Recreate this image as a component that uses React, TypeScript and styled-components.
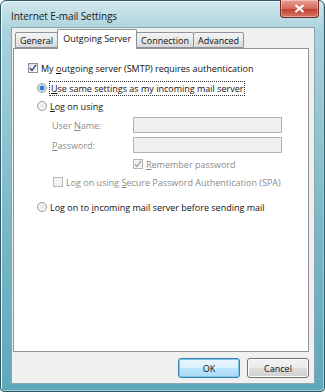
import styled, { createGlobalStyle } from "styled-components";

const GlobalStyle = createGlobalStyle`
    html, body {
        margin: 0;
        padding: 0;
        background: #ffffff;
    }
    body {
        font-family: "Open Sans", "Noto Sans", sans-serif;
    }
`

const Window = styled.div`
    box-sizing: border-box;
    width: 325px;
    height: 392px;
    display: flex;
    flex-direction: column;
    padding: 0 9px 7px 10px;
    border: 1px solid #2f5a66;
    border-radius: 6px 6px 4px 4px;
    background: linear-gradient(180deg, #d2e8ed 0%, #a9d2dc 30px, #78b6c6 60%, #5fa8ba 100%);
    box-shadow: inset 1px 1px 0 #e8f6f9, inset -1px -1px 0 #9fd0db;
`

const TitleBar = styled.div`
    height: 26px;
    display: flex;
    justify-content: space-between;
    align-items: flex-start;
`

const Title = styled.span`
    margin-top: 8px;
    font-size: 10px;
    color: #1b1b1b;
    letter-spacing: -0.1px;
`

const CloseButton = styled.div`
    width: 37px;
    height: 17px;
    margin-right: -4px;
    margin-top: -1px;
    display: flex;
    align-items: center;
    justify-content: center;
    border: 1px solid #6d2a2a;
    border-top: none;
    border-radius: 0 0 4px 4px;
    background: linear-gradient(180deg, #e7a193 0%, #d4695a 50%, #c0412f 55%, #d47a63 100%);
    box-shadow: inset 0 0 0 1px rgba(255, 255, 255, 0.35);
`

const Client = styled.div`
    flex: 1;
    display: flex;
    flex-direction: column;
    background: #f0f0f0;
    border: 1px solid #8aa6ae;
    padding: 2px 5px 5px 1px;
`

const TabRow = styled.div`
    display: flex;
    align-items: flex-end;
    height: 18px;
    padding-left: 3px;
    position: relative;
    z-index: 1;
`

const Tab = styled.div<{ $active?: boolean }>`
    box-sizing: border-box;
    height: ${p => (p.$active ? "20px" : "16px")};
    margin-bottom: ${p => (p.$active ? "-1px" : "0")};
    padding: 0 ${p => (p.$active ? "5px" : "4px")};
    display: flex;
    align-items: ${p => (p.$active ? "flex-start" : "center")};
    padding-top: ${p => (p.$active ? "2px" : "0")};
    font-size: 9px;
    color: #111;
    border: 1px solid #8e929b;
    border-bottom: ${p => (p.$active ? "none" : "1px solid #8e929b")};
    margin-left: -1px;
    border-radius: 2px 2px 0 0;
    background: ${p => (p.$active ? "#ffffff" : "linear-gradient(180deg, #f4f4f4 0%, #e8e8e8 50%, #d9d9d9 100%)")};
`

const Panel = styled.div`
    flex: 1;
    background: #ffffff;
    border: 1px solid #8e929b;
    padding: 10px 0 0 14px;
    display: flex;
    flex-direction: column;
    font-size: 9px;
    color: #111;
`

const Row = styled.div<{ $indent?: number; $gap?: number; $disabled?: boolean }>`
    display: flex;
    align-items: center;
    height: 18px;
    margin-top: ${p => p.$gap ?? 0}px;
    padding-left: ${p => p.$indent ?? 0}px;
    color: ${p => (p.$disabled ? "#8c8c8c" : "#111")};
    white-space: pre;
`

const Box = styled.span<{ $disabled?: boolean }>`
    box-sizing: border-box;
    width: 10px;
    height: 10px;
    margin-right: 3px;
    display: inline-flex;
    align-items: center;
    justify-content: center;
    border: 1px solid ${p => (p.$disabled ? "#b5b5b5" : "#8f8f8f")};
    background: ${p => (p.$disabled ? "#f4f4f4" : "linear-gradient(135deg, #dcdcdc, #ffffff)")};
`

const Radio = styled.span<{ $checked?: boolean }>`
    box-sizing: border-box;
    width: 10px;
    height: 10px;
    margin-right: 3px;
    border-radius: 50%;
    border: 1px solid #9a9a9a;
    background: ${p => (p.$checked
        ? "radial-gradient(circle, #2c6cbf 0, #3f87d8 2px, #d8e8f6 3px, #ececec 5px)"
        : "radial-gradient(circle, #e2e2e2 0, #f7f7f7 60%, #d6d6d6 100%)")};
`

const Focused = styled.span`
    outline: 1px dotted #333;
    outline-offset: 0;
    padding: 0 1px;
`

const Label = styled.span`
    width: 81px;
    color: #8c8c8c;
`

const Field = styled.div`
    box-sizing: border-box;
    width: 149px;
    height: 16px;
    border: 1px solid #a9b4bd;
    background: #efefef;
`

const U = styled.span`
    text-decoration: underline;
`

const ButtonRow = styled.div`
    display: flex;
    justify-content: flex-end;
    gap: 7px;
    padding-top: 6px;
`

const Button = styled.button<{ $default?: boolean }>`
    box-sizing: border-box;
    width: 62px;
    height: 20px;
    font-family: inherit;
    font-size: 9px;
    color: #111;
    border: 1px solid ${p => (p.$default ? "#3c7fb1" : "#707070")};
    border-radius: 3px;
    background: ${p => (p.$default
        ? "linear-gradient(180deg, #eaf6fd 0%, #d9f0fc 50%, #bee6fd 51%, #a7d9f5 100%)"
        : "linear-gradient(180deg, #f2f2f2 0%, #ebebeb 50%, #dddddd 51%, #cfcfcf 100%)")};
    box-shadow: ${p => (p.$default ? "inset 0 0 0 1px #7ec6e8" : "inset 0 0 0 1px #fcfcfc")};
`

const Check = ({ color }: { color: string }) => (
    <svg width="8" height="8" viewBox="0 0 8 8">
        <path d="M1 4.2 L3 6.5 L7 0.8" fill="none" stroke={color} strokeWidth="1.3" />
    </svg>
)

export default function App() {
    return <>
        <GlobalStyle />
        <Window>
            <TitleBar>
                <Title>Internet E-mail Settings</Title>
                <CloseButton>
                    <svg width="11" height="9" viewBox="0 0 11 9">
                        <path d="M1.5 1 L9.5 8 M9.5 1 L1.5 8" stroke="#fff" strokeWidth="2.2" />
                    </svg>
                </CloseButton>
            </TitleBar>
            <Client>
                <TabRow>
                    <Tab>General</Tab>
                    <Tab $active>Outgoing Server</Tab>
                    <Tab>Connection</Tab>
                    <Tab>Advanced</Tab>
                </TabRow>
                <Panel>
                    <Row>
                        <Box><Check color="#2b3b8c" /></Box>
                        <span>My <U>o</U>utgoing server (SMTP) requires authentication</span>
                    </Row>
                    <Row $indent={9} $gap={2}>
                        <Radio $checked />
                        <Focused><U>U</U>se same settings as my incoming mail server</Focused>
                    </Row>
                    <Row $indent={9}>
                        <Radio />
                        <span><U>L</U>og on using</span>
                    </Row>
                    <Row $indent={24} $gap={1}>
                        <Label>User <U>N</U>ame:</Label>
                        <Field />
                    </Row>
                    <Row $indent={24} $gap={2}>
                        <Label><U>P</U>assword:</Label>
                        <Field />
                    </Row>
                    <Row $indent={105} $gap={1} $disabled>
                        <Box $disabled><Check color="#a0a0a0" /></Box>
                        <span><U>R</U>emember password</span>
                    </Row>
                    <Row $indent={25} $disabled>
                        <Box $disabled />
                        <span>Log on using <U>S</U>ecure Password Authentication (SPA)</span>
                    </Row>
                    <Row $indent={9} $gap={7}>
                        <Radio />
                        <span>Log on to <U>i</U>ncoming mail server before sending mail</span>
                    </Row>
                </Panel>
                <ButtonRow>
                    <Button $default>OK</Button>
                    <Button>Cancel</Button>
                </ButtonRow>
            </Client>
        </Window>
    </>;
}
